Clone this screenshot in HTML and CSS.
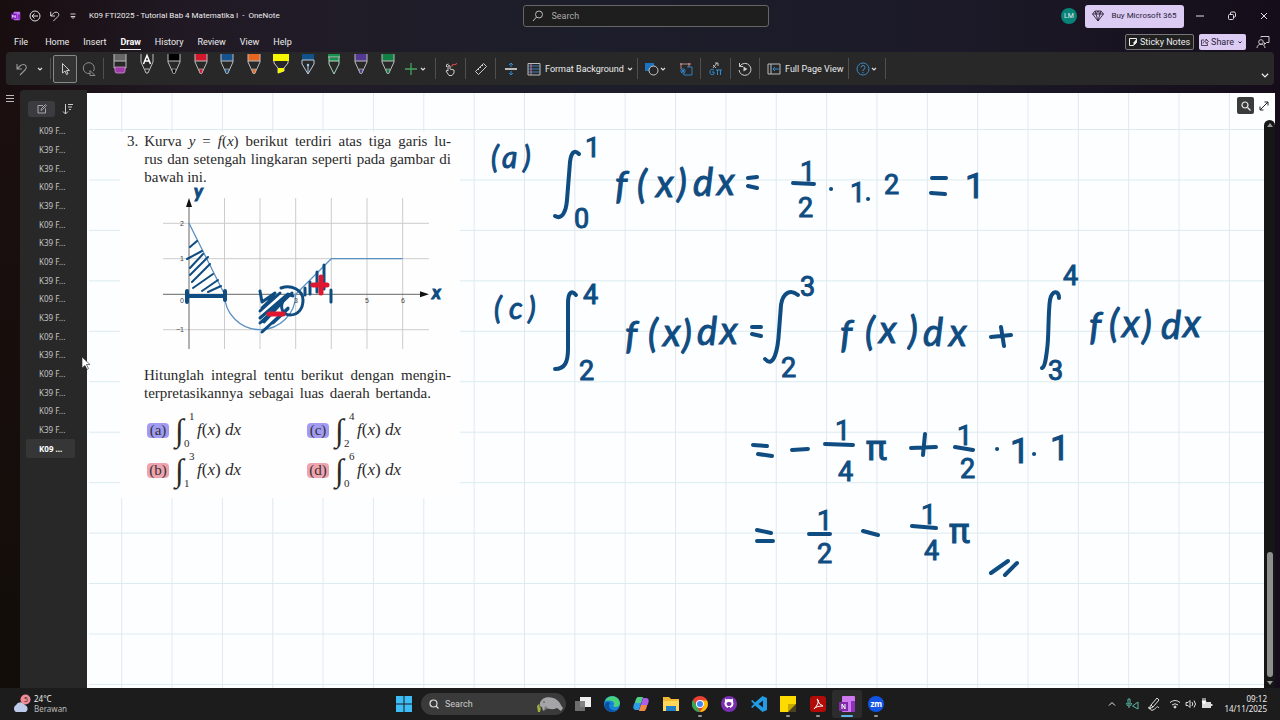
FILE: index.html
```html
<!DOCTYPE html>
<html lang="id">
<head>
<meta charset="utf-8">
<meta name="viewport" content="width=device-width, initial-scale=1">
<title>K09 FTI2025 - Tutorial Bab 4 Matematika I - OneNote</title>
<link rel="stylesheet" href="styles.css">
</head>
<body>
<svg class="defs" aria-hidden="true">
  <symbol id="chev" viewBox="0 0 8 8"><path d="M2 3l2 2 2-2" fill="none" stroke="#ddd" stroke-width="1.2"/></symbol>
  <symbol id="pen" viewBox="0 0 16 24"><path d="M2 2h12v7H2z" fill="currentColor"/><path d="M2 2v8l5 11h2l5-11V2M2 9h12" fill="none" stroke="#bdbdbd" stroke-width="1"/><path d="M6 17h4l-1 4.500H7z" fill="currentColor" stroke="#bdbdbd" stroke-width=".6"/></symbol>
  <symbol id="undo" viewBox="0 0 14 14"><path d="M2 2v5h5M2 7l3-3c2-2 5-2 6 0s0 3-1 4l-5 5" fill="none" stroke="currentColor" stroke-width="1.1"/></symbol>
</svg>
<div class="app">
  <header class="titlebar">
    <div class="quick">
      <svg class="i10" viewBox="0 0 12 12"><rect x="3" y="1" width="8" height="10" rx="1" fill="#c66ff0"/><path d="M8 4h3v6H8z" fill="#8c2cc4"/><rect x="0" y="3" width="7" height="7" rx="1" fill="#7d1fb8"/><path d="M2 8V5l3 3V5" fill="none" stroke="#fff"/></svg>
      <button class="plain" aria-label="Back"><svg class="i12" viewBox="0 0 12 12" fill="none" stroke="#ddd"><circle cx="6" cy="6" r="5"/><path d="M9 6H3.500M5.500 3.500L3 6l2.500 2.500"/></svg></button>
      <button class="plain" aria-label="Undo"><svg class="i12"><use href="#undo"/></svg></button>
      <button class="plain" aria-label="Customize toolbar"><svg class="i8" viewBox="0 0 8 8" fill="none" stroke="#ccc"><path d="M1.500 2h5M2 4.500l2 2 2-2z"/></svg></button>
      <h1 class="doc-title">K09 FTI2025 - Tutorial Bab 4 Matematika I &nbsp;-&nbsp; OneNote</h1>
    </div>
    <label class="search">
      <svg class="i12" viewBox="0 0 12 12" fill="none" stroke="#bbb"><circle cx="7" cy="4.500" r="3.500"/><path d="M4.500 7L1 11"/></svg>
      <input type="search" placeholder="Search" aria-label="Search">
    </label>
    <div class="account">
      <span class="avatar">LM</span>
      <button class="buy"><svg class="i12" viewBox="0 0 12 12" fill="none" stroke="#2b2238" stroke-width=".9"><path d="M3 1h6l2.500 3L6 11 .5 4zM.5 4h11M4 4l2 7 2-7M3 1l1 3 2-3 2 3 1-3"/></svg>Buy Microsoft 365</button>
      <button class="plain win" aria-label="Minimize"><svg class="i10" viewBox="0 0 10 10" stroke="#ddd"><path d="M1 5h8"/></svg></button>
      <button class="plain win" aria-label="Restore"><svg class="i10" viewBox="0 0 10 10" fill="none" stroke="#ddd"><rect x="1.500" y="3.500" width="5" height="5" rx="1"/><path d="M3.500 3V2q0-1 1-1H7q1.500 0 1.500 1.500V5q0 1-1 1H7"/></svg></button>
      <button class="plain win" aria-label="Close"><svg class="i10" viewBox="0 0 10 10" stroke="#ddd"><path d="M2 2l6 6M8 2L2 8"/></svg></button>
    </div>
  </header>
  <div class="tabrow">
    <nav class="tabs">
      <button class="file">File</button><button>Home</button><button>Insert</button><button class="on">Draw</button><button>History</button><button>Review</button><button>View</button><button>Help</button>
    </nav>
    <div class="tabright">
      <button class="sticky"><svg class="i8" viewBox="0 0 8 8"><path d="M.5.5h7v4l-3 3h-4z" fill="none" stroke="#eee"/><path d="M7.500 1v3.500l-3 3v-3z" fill="#eee"/></svg>Sticky Notes</button>
      <button class="share"><svg class="i8" viewBox="0 0 8 8" fill="none" stroke="#2b2238" stroke-width=".8"><path d="M3 2H.5v5.500h6V5.500M2 5.500c0-2 2-2.500 3-2.500V1l2.500 2.500L5 5.500V4"/></svg>Share<svg class="i8" viewBox="0 0 8 8"><path d="M2.500 3.500L4 5l1.500-1.500" fill="none" stroke="#2b2238"/></svg></button>
      <button class="plain" aria-label="Feedback"><svg class="i14" viewBox="0 0 14 14" fill="none" stroke="#ccc"><circle cx="5" cy="7" r="2.300"/><path d="M1 13c0-5 8-5 8 0M5 2.500V1.500h8v6h-2.500l-2 2V7.500"/></svg></button>
    </div>
  </div>
  <div class="ribbon" role="toolbar" aria-label="Draw">
    <button class="plain c20" aria-label="Undo"><svg class="i14 dim"><use href="#undo"/></svg></button>
    <button class="plain c16" aria-label="Undo options"><svg class="i8"><use href="#chev"/></svg></button>
    <i class="sep tight"></i>
    <button class="plain select" aria-label="Select"><svg class="i14" viewBox="0 0 14 14" fill="none" stroke="#ccc"><path d="M4.500 1.500v9.500l2.500-2 1.500 3.500 1.500-.7L8.500 8.500h3z"/></svg></button>
    <button class="plain c24" aria-label="Lasso select"><svg class="i14" viewBox="0 0 14 14" fill="none" stroke="#8c8c8c"><path d="M8 11.500A5.500 5.500 0 1 1 11.500 9M8 8.500l5 5-5 0z"/></svg></button>
    <i class="sep tight"></i>
    <div class="pens">
      <button class="plain" aria-label="Eraser"><svg class="pen" viewBox="0 0 16 24"><path d="M2 2h12v7H2z" fill="#666"/><path d="M2 2v14h12V2M2 9h12" fill="none" stroke="#bdbdbd"/><path d="M3 15h10v4q0 2-2 2H5q-2 0-2-2z" fill="#a03aa8" stroke="#d9a5dd" stroke-width=".7"/></svg></button>
      <button class="plain" aria-label="Text pen"><svg class="pen" viewBox="0 0 16 24"><path d="M2 2v8l5 11h2l5-11V2M6 17h4" fill="none" stroke="#bdbdbd"/><path d="M4.500 12L8 3.500l3.500 8.500M6 9h4" fill="none" stroke="#fff" stroke-width="1.500"/></svg></button>
      <button class="plain black" aria-label="Black pen"><svg class="pen"><use href="#pen"/></svg></button>
      <button class="plain red" aria-label="Red pen"><svg class="pen"><use href="#pen"/></svg></button>
      <button class="plain blue" aria-label="Blue pen"><svg class="pen"><use href="#pen"/></svg></button>
      <button class="plain orange" aria-label="Orange pen"><svg class="pen"><use href="#pen"/></svg></button>
      <button class="plain" aria-label="Yellow highlighter"><svg class="pen" viewBox="0 0 16 24"><path d="M0 2h16v7H0z" fill="#f6f600"/><path d="M1 9v2l4 5v5l6-2v-3l4-5V9" fill="none" stroke="#ccc"/><path d="M5 16h6v3l-6 2.500z" fill="#f6f600"/></svg></button>
      <button class="plain" aria-label="Blue fountain pen"><svg class="pen" viewBox="0 0 16 24"><path d="M2 2h12v6H2z" fill="#11528b"/><path d="M2 8v4l6 10 6-10V8zM8 13v8" fill="none" stroke="#bcd"/><circle cx="8" cy="13" r="1.200" fill="#9cf"/></svg></button>
      <button class="plain" aria-label="Green pencil"><svg class="pen" viewBox="0 0 16 24"><path d="M2 2h12v3H2zM3 6h10v3H3z" fill="#19904f"/><path d="M3 5v7l5 10 5-10V5M2 5h12M3 9h10" fill="none" stroke="#a9d8bd"/></svg></button>
      <button class="plain violet" aria-label="Purple pen"><svg class="pen"><use href="#pen"/></svg></button>
      <button class="plain green" aria-label="Green pen"><svg class="pen"><use href="#pen"/></svg></button>
    </div>
    <button class="plain add" aria-label="Add pen"><svg class="i14" viewBox="0 0 14 14" stroke="#43a35f" stroke-width="1.300"><path d="M7 1v12M1 7h12"/></svg><svg class="i8"><use href="#chev"/></svg></button>
    <i class="sep"></i>
    <button class="plain c15" aria-label="Draw with touch"><svg class="i14" viewBox="0 0 14 14" fill="none" stroke="#ccc"><path d="M4 9V4q1-1 2 0v3l4 1v3l-2 2.500H5L2 9l1-.8 1 .8M2.500 5q-1-3 2-3"/><path d="M8 5q-1-3 2-2.500T12.500 1" stroke="#d84a45"/></svg></button>
    <i class="sep"></i>
    <button class="plain c15" aria-label="Ruler"><svg class="i14" viewBox="0 0 14 14" fill="none" stroke="#ccc"><path d="M1.500 9.500l8-8 3 3-8 8zM4 7l1 1M6 5l1 1M8 3l1 1"/></svg></button>
    <i class="sep"></i>
    <button class="plain c15" aria-label="Insert space"><svg class="i14" viewBox="0 0 14 14" fill="none" stroke="#2f8ad0"><path d="M1 7h12" stroke="#bbb" stroke-width="2"/><path d="M7 5V1M5 3l2-2 2 2M7 9v4M5 11l2 2 2-2"/></svg></button>
    <button class="plain format"><svg class="i14" viewBox="0 0 14 14" fill="none"><path d="M1 4h12M1 7h12M1 10h12" stroke="#3f7fb8"/><path d="M4 1v12" stroke="#c27aa8"/><path d="M1 1.500h12v11.500H1z" stroke="#bbb"/></svg><span>Format Background</span><svg class="i8"><use href="#chev"/></svg></button>
    <i class="sep"></i>
    <button class="plain shapes" aria-label="Shapes"><svg class="i14" viewBox="0 0 14 14"><path d="M0 1h9v8H0z" fill="#1c74c0"/><circle cx="8.500" cy="8.500" r="4.500" fill="#262626" stroke="#ccc"/></svg><svg class="i8"><use href="#chev"/></svg></button>
    <button class="plain c25" aria-label="Ink to shape"><svg class="i14" viewBox="0 0 14 14" fill="none" stroke="#2f7fc0"><path d="M2 7V2h8v3M1 2h2M9 2h3M2 1v2M10 1v2" stroke="#b88"/><path d="M8 5h5v8H5v-2M4 6v6M1 9h6M2 7l4 4M6 7l-4 4"/></svg></button>
    <i class="sep"></i>
    <button class="plain c15" aria-label="Ink to math"><svg class="i14" viewBox="0 0 14 14" fill="none" stroke="#2f8ad0"><path d="M4 6l4-5M6 1h3v3M4 3l3 3" stroke="#bbb"/><path d="M5 8Q1 6 1 10t4 2v-2H3M7 8h6M8.500 8v5M11.500 8v5"/></svg></button>
    <i class="sep"></i>
    <button class="plain c14" aria-label="Ink replay"><svg class="i14" viewBox="0 0 14 14" fill="none" stroke="#ccc"><path d="M2 4a6 6 0 1 1-1 4M1.500 1v3.500H5"/><path d="M5.500 4.500v5L9.500 7z" fill="#ccc" stroke="none"/></svg></button>
    <i class="sep"></i>
    <button class="plain full"><svg class="i14" viewBox="0 0 14 14" fill="none" stroke="#bbb"><path d="M1 2h12v10H1zM4 2v10"/><path d="M12 7H6M8 5L6 7l2 2" stroke="#2f8ad0"/></svg>Full Page View</button>
    <i class="sep"></i>
    <button class="plain help" aria-label="Help"><svg class="i14" viewBox="0 0 14 14" fill="none" stroke="#3a89c4"><circle cx="7" cy="7" r="6"/><path d="M5 5.500q0-2 2-2t2 2T7 8v1M7 10v1"/></svg><svg class="i8"><use href="#chev"/></svg></button>
    <i class="sep"></i>
    <button class="plain collapse" aria-label="Ribbon options"><svg class="i10" viewBox="0 0 8 8"><path d="M1.500 3L4 5.500 6.500 3" fill="none" stroke="#eee"/></svg></button>
  </div>
  <main class="work">
    <div class="rail"><button class="plain" aria-label="Notebooks"><svg class="i10" viewBox="0 0 10 10" stroke="#bbb"><path d="M1 2.500h8M1 5.500h8M1 8.500h8"/></svg></button></div>
    <aside class="pages">
      <div class="pagetools">
        <button class="addpage" aria-label="Add page"><svg class="i10" viewBox="0 0 10 10" fill="none" stroke="#a5a5ad"><path d="M6 1.500H1v7.500h7.500V4.500M4 6.500l.5-2L8.500.5l1 1-4 4z"/></svg></button>
        <button class="plain" aria-label="Sort pages"><svg class="i12" viewBox="0 0 12 12" fill="none" stroke="#ccc"><path d="M3.500 1v10M1 8.500L3.500 11 6 8.500M6 1.500h5M6 4h4M7 6.500h2"/></svg></button>
      </div>
      <ul class="pagelist">
        <li><a href="#">K09 F...</a></li><li><a href="#">K39 F...</a></li><li><a href="#">K39 F...</a></li><li><a href="#">K09 F...</a></li><li><a href="#">K39 F...</a></li><li><a href="#">K09 F...</a></li><li><a href="#">K39 F...</a></li><li><a href="#">K09 F...</a></li><li><a href="#">K39 F...</a></li><li><a href="#">K09 F...</a></li><li><a href="#">K39 F...</a></li><li><a href="#">K09 F...</a></li><li><a href="#">K39 F...</a></li><li><a href="#">K09 F...</a></li><li><a href="#">K39 F...</a></li><li><a href="#">K09 F...</a></li><li><a href="#">K39 F...</a></li><li><a href="#" class="current" aria-current="page">K09 ...</a></li>
      </ul>
    </aside>
    <section class="canvas" aria-label="Page">
      <svg class="layer" aria-hidden="true">
        <defs><pattern id="grid" x="34.200" y="36" width="50.350" height="50.450" patternUnits="userSpaceOnUse"><path d="M.5 0V51" stroke="#e0e9ee"/><path d="M0 .5H51" stroke="#dbebef"/></pattern></defs>
        <rect x="2" width="100%" height="100%" fill="url(#grid)"/>
      </svg>
      <article class="problem">
        <div class="stmt">
          <span class="num">3.</span>
          <p><span class="line">Kurva <i>y</i> = <i>f</i>(<i>x</i>) berikut terdiri atas tiga garis lu-</span><span class="line">rus dan setengah lingkaran seperti pada gambar di</span><span class="line last">bawah ini.</span></p>
        </div>
        <svg class="graph" viewBox="120 186 340 180" role="img" aria-label="Kurva y = f(x)">
          <path d="M224.500 198v151M260 198v151M295.700 198v151M331.300 198v151M367 198v151M402.700 198v151M163 223.300h266M163 258.700h266M163 329.700h266" stroke="#ccc" fill="none"/>
          <path d="M189 205v144M163 294.300h258" stroke="#666" fill="none"/>
          <path d="M189 198l3 9h-6zM429 294.300l-9-3v6z" fill="#111"/>
          <path d="M189 223.300l35.500 71a35.600 35.400 0 0 0 71.200 0l35.600-35.600h71.400" fill="none" stroke="#5a8fc4" stroke-width="1.300"/>
          <g class="ticks"><text x="180" y="226">2</text><text x="180" y="261">1</text><text x="176" y="332">−1</text><text x="180" y="303">0</text><text x="294" y="303">3</text><text x="365" y="303">5</text><text x="401" y="303">6</text></g>
        </svg>
        <p class="ask"><span class="line">Hitunglah integral tentu berikut dengan mengin-</span><span class="line">terpretasikannya sebagai luas daerah bertanda.</span></p>
        <div class="choices">
          <div class="choice"><mark class="lilac">(a)</mark><span class="int">∫<sup>1</sup><sub>0</sub></span><span class="fx"><i>f</i>(<i>x</i>) <i>dx</i></span></div>
          <div class="choice"><mark class="lilac">(c)</mark><span class="int">∫<sup>4</sup><sub>2</sub></span><span class="fx"><i>f</i>(<i>x</i>) <i>dx</i></span></div>
          <div class="choice"><mark class="rose">(b)</mark><span class="int">∫<sup>3</sup><sub>1</sub></span><span class="fx"><i>f</i>(<i>x</i>) <i>dx</i></span></div>
          <div class="choice"><mark class="rose">(d)</mark><span class="int">∫<sup>6</sup><sub>0</sub></span><span class="fx"><i>f</i>(<i>x</i>) <i>dx</i></span></div>
        </div>
      </article>
      <svg class="layer ink">
        <g transform="translate(-87 -93)">
          <!-- shading and marks over the graph -->
          <g class="hatch">
            <path d="M190 247l7-6M187 259l15-8M190 268l13-14M190 275l18-18M192 282l18-18M193 288l20-14M202 291l16-11M208 292l13-6" stroke-width="2"/>
            <path d="M188 296h36M187 291v11M225 291v9" stroke-width="4"/>
            <path d="M260 291l2 11 13-9M260 311l20-18M260 318l28-24M260 323l32-30M262 332l26-24M264 322l22-24M273 323l15-14M262 308l12-12"/>
            <path d="M281 288c10-4 22 2 22 12 0 9-5 15-13 15-8 0-10-8-7-14 2-5 7-7 10-5"/>
            <path d="M305 288v7M310 282v12M317 272v20M324 265v24M331 290v12" stroke-width="3"/>
            <path d="M321 277v16M313 285h14" class="redink"/><path d="M269 314h14" class="redink"/>
          </g>
          <!-- operators, integral signs and fraction bars -->
          <g class="strokes">
            <path d="M579 154c-5-5-8-1-9 8l-3 38c-1 12-5 20-12 16"/>
            <path d="M576 295c-5-6-8-1-8 8v46c0 13-3 20-13 20"/>
            <path d="M798 295c-7-6-15-3-17 10l-2 26c-1 18-5 38-14 28"/>
            <path d="M1059 298c0-8-7-8-9 2-2 12-1 38-3 50-1 8-2 17-5 18"/>
            <path d="M748 178l9-1M748 186l9 2M752 327l9 0M752 334l9 2M932 178h14M931 193l14 1M753 445l14 1M758 454l14 2M757 530l14 3M757 541h16"/>
            <path d="M793 183l21 1M825 444l28 1M955 447l18 3M809 534h21M912 526l24 2"/>
            <path d="M991 337l20-2M1001 327l3 19M911 448l25-1M925 434l-2 21M792 450l16-1M863 531l15 4M991 573l17-12M1005 575l12-12"/>
            <path d="M831 189h.1M868 199h.1M997 449h.1M1034 454h.1"/>
          </g>
          <g class="hand">
            <text x="491" y="168" class="md">(</text><text x="502" y="168" class="md">a</text><text x="523" y="168" class="md">)</text>
            <text x="494" y="319" class="md">(</text><text x="509" y="319" class="md">c</text><text x="528" y="319" class="md">)</text>
            <text x="615" y="199">f</text><text x="637" y="198">(</text><text x="656" y="197">x</text><text x="677" y="197">)</text><text x="693" y="196">d</text><text x="717" y="195">x</text>
            <text x="625" y="349">f</text><text x="648" y="347">(</text><text x="663" y="346">x</text><text x="682" y="348">)</text><text x="697" y="345">d</text><text x="720" y="344">x</text>
            <text x="840" y="348">f</text><text x="865" y="345">(</text><text x="879" y="343">x</text><text x="908" y="344">)</text><text x="923" y="346">d</text><text x="949" y="346">x</text>
            <text x="1089" y="340">f</text><text x="1109" y="337">(</text><text x="1122" y="337">x</text><text x="1142" y="339">)</text><text x="1161" y="339">d</text><text x="1183" y="337">x</text>
            <text x="194" y="198" class="tiny">y</text><text x="432" y="299" class="tiny">x</text>
          </g>
          <g class="digits">
            <text x="585" y="157">1</text><text x="574" y="228">0</text>
            <text x="583" y="304">4</text><text x="579" y="380">2</text>
            <text x="800" y="296">3</text><text x="781" y="377">2</text>
            <text x="1063" y="285">4</text><text x="1048" y="380">3</text>
            <text x="800" y="181">1</text><text x="798" y="217">2</text>
            <text x="850" y="202">1</text><text x="884" y="194">2</text><text x="965" y="198" class="tall">1</text>
            <text x="835" y="440">1</text><text x="838" y="481">4</text><text x="866" y="460" class="tall">π</text>
            <text x="957" y="445">1</text><text x="960" y="478">2</text><text x="1010" y="463" class="tall">1</text><text x="1050" y="460" class="tall">1</text>
            <text x="817" y="530">1</text><text x="817" y="563">2</text>
            <text x="921" y="524">1</text><text x="924" y="560">4</text><text x="949" y="543" class="tall">π</text>
          </g>
        </g>
      </svg>
      <div class="viewtools">
        <button class="find" aria-label="Find on page"><svg class="i10" viewBox="0 0 10 10" fill="none" stroke="#eee" stroke-width="1.200"><circle cx="4" cy="4" r="3"/><path d="M6.500 6.500L9.500 9.500"/></svg></button>
        <button class="plain" aria-label="Expand"><svg class="i10" viewBox="0 0 10 10" fill="none" stroke="#222"><path d="M1 9l8-8M5.500 1H9v3.500M1 5.500V9h3.500"/></svg></button>
      </div>
      <div class="scroll"><svg class="i8" viewBox="0 0 8 8"><path d="M4 2l3 4H1z" fill="#999"/></svg><span class="thumb"></span><svg class="i8" viewBox="0 0 8 8"><path d="M4 6l3-4H1z" fill="#999"/></svg></div>
    </section>
    <svg class="cursor" viewBox="0 0 10 14"><path d="M1 1v11l3-2.500 2 4 1.500-1-2-4H9z" fill="#fff" stroke="#222" stroke-width=".6"/></svg>
  </main>
  <footer class="taskbar">
    <div class="weather">
      <svg viewBox="0 0 20 20"><path d="M4 18a4 4 0 0 1 0-7 5 5 0 0 1 9 0 4 4 0 0 1 1 7z" fill="#bccbea"/><circle cx="13.500" cy="5.500" r="5" fill="#f18a99"/><text x="12" y="8">5</text></svg>
      <div><span>24°C</span><span class="soft">Berawan</span></div>
    </div>
    <div class="dock">
      <button class="plain start" aria-label="Start"><svg class="i16" viewBox="0 0 16 16" fill="#3dbdf5"><path d="M0 0h7.500v7.500H0zM8.500 0H16v7.500H8.500zM0 8.500h7.500V16H0zM8.500 8.500H16V16H8.500z"/></svg></button>
      <label class="tasksearch"><svg class="i10" viewBox="0 0 10 10" fill="none" stroke="#ddd" stroke-width="1.200"><circle cx="4.500" cy="4.500" r="3.500"/><path d="M7 7l2.500 2.500"/></svg><input type="search" placeholder="Search" aria-label="Search Windows"><svg class="manatee" viewBox="0 0 28 18"><path d="M4 8C6 1 16 1 21 5c3 2 4 6 6 8l-2 3-4-3c-4 2-8 1-11 0l-3 3-1-4C4 12 3 10 4 8z" fill="#a5a5a8"/><path d="M9 11l-1 5 4-3z" fill="#77777c"/><circle cx="8" cy="7" r=".7" fill="#333"/><path d="M2 17l-1-6 2-2 1 4 1-1-1 5z" fill="#9eb53c"/></svg></label>
      <div class="apps">
        <button aria-label="Task view"><svg viewBox="0 0 16 16"><path d="M5 1h11v10H5z" fill="#eee"/><path d="M0 5h10v10H0z" fill="#777" opacity=".9"/></svg></button>
        <button aria-label="Edge"><svg viewBox="0 0 16 16"><circle cx="8" cy="8" r="8" fill="#1681d8"/><path d="M1 5C4-2 15-1 16 7c0 4-5 5-7 3 2-2 1-5-2-5-3-1-5 0-6 0z" fill="#48d17f"/><path d="M6 7c-3 4 1 9 7 7-5 4-12 1-12-5 0-3 3-4 5-2z" fill="#0b4f9f"/></svg></button>
        <button aria-label="Copilot"><svg viewBox="0 0 16 16"><path d="M5 1h5l-4 13H3q-4 0-2-6z" fill="#2b9de8"/><path d="M5 1h5l-2 6H2q1-6 3-6z" fill="#4dcf84"/><path d="M11 15H6l4-13h3q4 0 2 6z" fill="#b05de8"/><path d="M11 15H6l2-6h6q-1 6-3 6z" fill="#f28a45"/></svg></button>
        <button aria-label="File Explorer"><svg viewBox="0 0 16 16"><path d="M0 1h6l2 2h8v12H0z" fill="#f2b932"/><path d="M0 5h16v10H0z" fill="#ffd65c"/><path d="M3 10h10v5H3z" fill="#1f7ec9"/></svg></button>
        <button class="run" aria-label="Chrome"><svg viewBox="0 0 16 16"><circle cx="8" cy="8" r="8" fill="#e94235"/><path d="M1 4l4 6 3 6A8 8 0 0 1 1 4z" fill="#32a853"/><path d="M8 4.500h7A8 8 0 0 1 8 16l4-6z" fill="#fbbd05"/><circle cx="8" cy="8" r="4" fill="#fff"/><circle cx="8" cy="8" r="3" fill="#4285f4"/></svg></button>
        <button aria-label="GitHub Desktop"><svg viewBox="0 0 16 16"><circle cx="8" cy="8" r="8" fill="#7a2fb0"/><circle cx="8" cy="7.500" r="4.500" fill="#fff"/><path d="M4 6V2.500L7 4h2l3-1.500V6z" fill="#fff"/><path d="M5.500 7.500c0-2 5-2 5 0s-1.500 2.500-2.500 2.500-2.500-.5-2.500-2.500zM7 11h2v3H7z" fill="#7a2fb0"/></svg></button>
        <button aria-label="Visual Studio Code"><svg viewBox="0 0 16 16"><path d="M11.500 0L16 2v12l-4.500 2L4 9.500 1.500 12 0 11l3-3-3-3 1.500-1L4 6.500zM12 4.500L7.500 8l4.500 3.500z" fill="#239ce5" fill-rule="evenodd"/></svg></button>
        <button class="run" aria-label="Sticky Notes"><svg viewBox="0 0 16 16"><path d="M0 0h16v16H0z" fill="#fddb00"/><path d="M8 16V8h8v8z" fill="#4a4220"/><path d="M8 16V8h8z" fill="#c9a800"/></svg></button>
        <button class="run" aria-label="Acrobat"><svg viewBox="0 0 16 16"><rect width="16" height="16" rx="3" fill="#b30b08"/><path d="M7 3q2 0 1 4-1 3-4 6 2-3 9-3-4-1-6-7z" fill="none" stroke="#fff"/></svg></button>
        <button class="active" aria-label="OneNote"><svg viewBox="0 0 16 16"><rect x="3" width="13" height="16" rx="1" fill="#ce79ed"/><path d="M12 5h4v11h-4z" fill="#8e31bd"/><path d="M0 6h9v9H0z" fill="#8129ab"/><path d="M3 13V8l3 5V8" fill="none" stroke="#fff"/></svg></button>
        <button class="run" aria-label="Zoom"><span class="zm">zm</span></button>
      </div>
    </div>
    <div class="tray">
      <svg class="i10" viewBox="0 0 10 10" fill="none" stroke="#eee"><path d="M2 6.500L5 3.500l3 3"/></svg>
      <svg class="i14" viewBox="0 0 14 14" fill="none" stroke="#58b8a5"><path d="M3 2h2v5H3zM1.500 6q0 3 2.500 3t2.500-3M4 9v2M13 5v7L7.500 9z"/></svg>
      <svg class="i14" viewBox="0 0 14 14" fill="none" stroke="#ddd"><path d="M4 8l6-7 2 2-6 7zM4 8l-2 4 4-2M1 11c4-3 1 4 5 2s4-5 6-2"/></svg>
      <div class="status"><svg class="i12" viewBox="0 0 12 12" fill="none" stroke="#ddd"><path d="M1 4.500q5-4 10 0M3 7q3-2.500 6 0"/><circle cx="6" cy="9" r="1" fill="#ddd"/></svg><svg class="i12" viewBox="0 0 12 12" fill="none" stroke="#ddd"><path d="M1 4.500h2l2-2v7l-2-2H1zM7 4q1.500 2 0 4M9 2.500q3 3.500 0 7"/></svg><svg class="i12" viewBox="0 0 12 12"><path d="M1 4h9v6H1zM10 6h1.500v2H10z" fill="#ddd"/><path d="M2 0v3M4 0v3M1 3h4l-2 3z" fill="#fff" stroke="#fff"/></svg></div>
      <time class="clock" datetime="2025-11-14T09:12">09:12<span>14/11/2025</span></time>
    </div>
  </footer>
</div>
</body>
</html>
```

FILE: styles.css
```css
* { box-sizing: border-box; }
body { margin: 0; font: 9px/12px Roboto, "Noto Sans", sans-serif; color: #ececec; background: #15101a; }
button, input { font: inherit; color: inherit; }
button { cursor: pointer; }
h1, p, ul { margin: 0; padding: 0; }
ul { list-style: none; }
a { color: inherit; text-decoration: none; }
svg { flex: none; display: block; }
.defs { position: absolute; width: 0; height: 0; }
.i8 { width: 8px; height: 8px; }
.i10 { width: 10px; height: 10px; }
.i12 { width: 12px; height: 12px; }
.i14 { width: 14px; height: 14px; }
.i16 { width: 16px; height: 16px; }
.dim { color: #999; }
.plain { border: 0; padding: 0; background: none; display: flex; align-items: center; justify-content: center; }

.app { min-height: 100vh; display: flex; flex-direction: column; background: linear-gradient(90deg, #180d0f 0, #211a25 15%, #1d1e2b 45%, #1c1a28 75%, #150d19 100%); }

.titlebar { height: 32px; padding-left: 11px; display: grid; grid-template-columns: 1fr 246px 1fr; align-items: center; }
.quick { display: flex; align-items: center; gap: 8px; }
.quick svg { color: #ddd; }
.doc-title { font-size: 8px; font-weight: 400; margin-left: 4px; white-space: nowrap; }
.search { height: 22px; display: flex; align-items: center; gap: 8px; padding: 0 8px; background: #1e1e1e; border: 1px solid #666; border-radius: 3px; }
.search input, .tasksearch input { flex: 1; min-width: 0; border: 0; padding: 0; background: none; outline: 0; }
.search input::placeholder { color: #aaa; }
.account { display: flex; align-items: center; justify-content: flex-end; padding-right: 11px; }
.avatar { width: 16px; height: 16px; border-radius: 50%; background: #078378; text-align: center; font-size: 7px; line-height: 16px; margin-right: 8px; }
.buy { height: 23px; width: 99px; border: 0; border-radius: 3px; padding: 0; background: #dccbf3; color: #2b2238; display: flex; align-items: center; justify-content: center; gap: 7px; margin-right: 11px; font-size: 8px; white-space: nowrap; }
.win { width: 10px; margin-left: 22px; }
.buy + .win { margin-left: 0; }

.tabrow { height: 20px; display: flex; justify-content: space-between; align-items: center; padding: 0 10px 0 14px; }
.tabs { display: flex; gap: 14px; }
.tabs .file { margin-right: 3px; }
.tabs button { border: 0; background: none; padding: 1px 0; border-bottom: 1px solid transparent; }
.tabs .on { font-weight: 700; color: #fff; border-color: #eee; }
.tabright { display: flex; align-items: center; gap: 5px; }
.tabright button:last-child { margin-left: 5px; }
.sticky, .share { height: 16px; border-radius: 2px; padding: 0 3px; display: flex; align-items: center; gap: 3px; white-space: nowrap; }
.sticky { background: #202020; border: 1px solid #777; }
.share { background: #dccbf3; border: 0; padding: 0 2px; gap: 2px; color: #2b2238; }

.ribbon { height: 33px; margin: 0 6px; padding-left: 6px; display: flex; align-items: center; background: #282828; border-radius: 4px; }
.sep { width: 15px; height: 21px; flex: none; background: linear-gradient(#505050, #505050) center / 1px 100% no-repeat; }
.sep.tight { width: 5px; }
.c14 { width: 14px; } .c15 { width: 15px; } .c16 { width: 16px; } .c20 { width: 20px; } .c24 { width: 24px; }
.c25 { width: 25px; justify-content: flex-end; }
.select { width: 24px; height: 28px; border: 1px solid #888; border-radius: 2px; background: #333; }
.pens { display: flex; align-self: flex-start; width: 294px; margin: 0 3px 0 1px; }
.pens button { flex: 1; }
.pen { width: 16px; height: 24px; }
.black { color: #000; } .red { color: #d3182e; } .blue { color: #15528e; } .orange { color: #e5661c; } .violet { color: #523a94; } .green { color: #118044; }
.add .i8 { margin: 0 1px; }
.format { gap: 4px; padding-left: 9px; width: 112px; white-space: nowrap; justify-content: flex-start; }
.format .i8 { margin-left: -2px; }
.shapes .i8 { margin-right: 1px; }
.full { gap: 4px; width: 74px; white-space: nowrap; justify-content: flex-start; }
.collapse { margin-left: auto; margin-right: 4px; align-self: flex-end; padding-bottom: 5px; }

.work { flex: 1; display: flex; margin: 8px 5px 0 0; position: relative; }
.rail { width: 20px; display: flex; justify-content: center; align-items: flex-start; background: linear-gradient(#1b0f0f, #120d09); }
.pages { width: 67px; background: #282828; margin-top: -3px; padding-top: 11px; border-radius: 4px 0 0 0; }
.pagetools { display: flex; align-items: center; gap: 7px; padding-left: 8px; }
.addpage { width: 27px; height: 16px; border: 0; border-radius: 3px; padding: 0; background: #3c3c40; display: flex; align-items: center; justify-content: center; }
.pagelist { display: flex; flex-direction: column; height: 336px; margin: 5px 12px 0 6px; font-family: "Noto Sans", sans-serif; font-size: 8px; color: #c4c4c4; }
.pagelist li { flex: 1; display: flex; }
.pagelist a { flex: 1; display: flex; align-items: center; padding-left: 13px; border-radius: 2px; }
.pagelist .current { background: #363636; color: #fff; font-weight: 700; }
.cursor { position: absolute; left: 81px; top: 263px; width: 10px; height: 14px; }

.canvas { flex: 1; position: relative; background: #fdfeff; overflow: hidden; color: #222; }
.layer { position: absolute; inset: 0; width: 100%; height: 100%; }
.ink { pointer-events: none; }
.problem { position: absolute; left: 33px; top: 39px; width: 340px; height: 366px; background: #fefefe; font: 15px/18px "Liberation Serif", serif; color: #2a2a2a; }
.stmt { display: flex; gap: 6px; padding: 0 9px 0 7px; }
.num { white-space: nowrap; }
.stmt p { flex: 1; }
.line { display: block; text-align-last: justify; white-space: nowrap; }
.line.last { text-align-last: left; }
.graph { width: 340px; height: 180px; }
.ticks { font: 7px "Liberation Sans", sans-serif; fill: #444; }
.ask { padding: 0 9px 0 24px; }
.ask .line:last-child { padding-right: 20px; }
.choices { display: grid; grid-template-columns: 160px 1fr; grid-auto-rows: 40px; padding: 8px 0 0 27px; }
.choice { display: flex; align-items: center; }
mark { color: #333; border-radius: 4px; padding: 0 1px; width: 22px; line-height: 15px; text-align: center; }
.lilac { background: #a29bf4; }
.rose { background: #efa3ae; }
.int { position: relative; width: 22px; margin: 0 0 0 6px; font-size: 32px; line-height: 40px; }
.int sup, .int sub { position: absolute; font-size: 11px; line-height: 11px; }
.int sup { left: 14px; top: 1px; }
.int sub { left: 9px; bottom: 1px; }
.fx { font-size: 17px; }

.strokes, .hatch { fill: none; stroke: #0f4c81; stroke-width: 4px; stroke-linecap: round; stroke-linejoin: round; }
.hatch { stroke-width: 3px; }
.redink { stroke: #e0182f; stroke-width: 5px; }
.hand, .digits { fill: #0f4c81; stroke: #0f4c81; }
.hand { font: italic 38px Lato, sans-serif; }
.hand .md { font-size: 30px; }
.hand .tiny { font-size: 18px; font-weight: 700; }
.digits { font: 27px Roboto, sans-serif; }
.digits .tall { font-size: 35px; }

.viewtools { position: absolute; right: 6px; top: 4px; display: flex; gap: 5px; }
.find { width: 17px; height: 17px; border: 0; border-radius: 2px; padding: 0; background: #3b3b3b; display: flex; align-items: center; justify-content: center; }
.scroll { position: absolute; right: 0; top: 27px; bottom: 0; width: 11px; padding: 1px; background: #161616; border-radius: 6px 6px 0 0; display: flex; flex-direction: column; align-items: center; }
.thumb { width: 6px; height: 22%; margin: auto 0 2px; border-radius: 3px; background: #8e8e8e; }

.taskbar { height: 32px; display: grid; grid-template-columns: 1fr auto 1fr; align-items: center; background: #1c1c1c; font-family: "Noto Sans", sans-serif; font-size: 8px; line-height: 10px; }
.weather { display: flex; align-items: center; gap: 2px; padding-left: 12px; }
.weather svg { width: 20px; height: 20px; }
.weather text { font-size: 7px; fill: #331; }
.weather span { display: block; }
.soft { color: #bbb; }
.dock { display: flex; align-items: center; }
.start { width: 30px; }
.tasksearch { width: 145px; height: 22px; margin: 0 2px; padding: 0 2px 0 8px; display: flex; align-items: center; gap: 6px; background: #3a3a3a; border-radius: 11px; font-family: Roboto, sans-serif; font-size: 9px; }
.tasksearch input::placeholder { color: #ccc; }
.manatee { width: 28px; height: 18px; }
.apps { display: flex; width: 323px; }
.apps button { position: relative; flex: 1; height: 28px; border: 0; border-radius: 3px; padding: 0; background: none; display: flex; align-items: center; justify-content: center; }
.apps svg { width: 16px; height: 16px; }
.apps .active { background: #2c2c2c; }
.run::after, .active::after { content: ""; position: absolute; bottom: 1px; left: 50%; width: 4px; height: 2px; margin-left: -2px; border-radius: 1px; background: #999; }
.active::after { width: 12px; margin-left: -6px; background: #5fb5e8; }
.zm { width: 16px; height: 16px; border-radius: 50%; background: #1254e6; color: #fff; font-size: 8px; line-height: 15px; font-weight: 700; }
.tray { display: flex; align-items: center; justify-content: flex-end; gap: 8px; padding-right: 13px; }
.status { display: flex; gap: 4px; }
.clock { text-align: right; width: 46px; }
.clock span { display: block; }
```
